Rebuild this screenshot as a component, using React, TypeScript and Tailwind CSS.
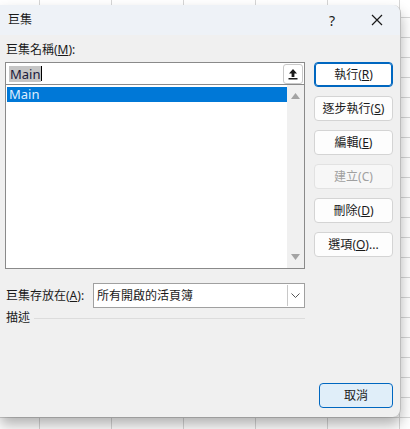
import React from "react";

const font = { fontFamily: '"Noto Sans", "Noto Sans CJK TC", sans-serif' };

function Btn({ label, keyChar, suffix = "", primary, disabled }: { label: string; keyChar: string; suffix?: string; primary?: boolean; disabled?: boolean }) {
  return (
    <button
      className={
        "flex h-[25px] w-[79px] items-center justify-center rounded-[4px] border text-[12px] leading-none " +
        (primary
          ? "border-[#0067c0] bg-white text-[#1a1a1a] shadow-[inset_0_0_0_1px_#0067c0]"
          : disabled
          ? "border-[#e2e2e2] bg-[#f7f7f7] text-[#a0a0a0]"
          : "border-[#d4d4d4] bg-[#fdfdfd] text-[#1a1a1a]")
      }
    >
      {label}(<u className={disabled ? "no-underline" : ""}>{keyChar}</u>){suffix}
    </button>
  );
}

export default function App() {
  return (
    <div
      className="relative h-[429px] w-[410px] overflow-hidden bg-white bg-[linear-gradient(to_right,#d6d6d6_1px,transparent_1px),linear-gradient(to_bottom,#d6d6d6_1px,transparent_1px)] bg-size-[72px_20px] bg-position-[39px_17px]"
      style={font}
    >
      <div className="absolute left-0 top-[5px] flex h-[412px] w-[401px] flex-col overflow-hidden rounded-r-[8px] border-r border-[#bdbdbd] bg-[#f0f0f0] shadow-[0_8px_14px_rgba(0,0,0,0.3)]">
        {/* title bar */}
        <div className="flex h-[30px] items-center bg-[#eef2f7] pl-[8px] text-[12px] text-[#1a1a1a]">
          <span className="flex-1">巨集</span>
          <span className="w-[14px] text-center text-[14px]">?</span>
          <span className="ml-[31px] mr-[16px] flex w-[14px] items-center justify-center">
            <svg width="12" height="12" viewBox="0 0 12 12">
              <path d="M1 1L11 11M11 1L1 11" stroke="#1a1a1a" strokeWidth="1.2" />
            </svg>
          </span>
        </div>

        {/* body */}
        <div className="flex flex-1 flex-col px-[5px] pt-[7px] text-[12px] text-[#1a1a1a]">
          <div className="pl-[1px] leading-[16px]">
            巨集名稱(<u>M</u>):
          </div>

          <div className="mt-[4px] flex">
            {/* left column */}
            <div className="flex w-[300px] flex-col">
              <div className="flex h-[23px] items-center border border-[#8a8a8a] bg-white pl-[3px] pr-[1px]">
                <span className="bg-[#c6c6c6] px-[1px] text-[13px] leading-[16px] text-[#1a1a3a]">Main</span>
                <span className="h-[15px] w-px bg-black" />
                <span className="flex-1" />
                <span className="flex h-[20px] w-[20px] items-center justify-center rounded-[3px] border border-[#c8c8c8] bg-white">
                  <svg width="10" height="12" viewBox="0 0 10 12">
                    <path d="M5 1L1 5.5H3.6V9H6.4V5.5H9Z" fill="#1a1a1a" />
                    <rect x="0.5" y="10" width="9" height="1.5" fill="#1a1a1a" />
                  </svg>
                </span>
              </div>
              <div className="flex h-[184px] border border-t-0 border-[#8a8a8a] bg-white">
                <div className="flex-1 pl-px pt-[2px]">
                  <div className="flex h-[15px] items-center bg-[#0078d7] pl-[2px] text-[13px] text-[#dfeeff]">Main</div>
                </div>
                <div className="flex w-[17px] flex-col items-center justify-between bg-[#f0f0f0] py-[8px]">
                  <svg width="9" height="6" viewBox="0 0 9 6">
                    <path d="M4.5 0L9 6H0Z" fill="#a3a3a3" />
                  </svg>
                  <svg width="9" height="6" viewBox="0 0 9 6">
                    <path d="M0 0H9L4.5 6Z" fill="#a3a3a3" />
                  </svg>
                </div>
              </div>

              <div className="mt-[14px] flex items-center">
                <span className="w-[88px] pl-[1px]">
                  巨集存放在(<u>A</u>):
                </span>
                <div className="flex h-[25px] flex-1 items-center border border-[#a0a0a0] bg-white pl-[3px]">
                  <span className="flex-1">所有開啟的活頁簿</span>
                  <span className="mr-px flex h-[21px] w-[16px] items-center justify-center border-l border-[#c8c8c8]">
                    <svg width="9" height="5" viewBox="0 0 9 5">
                      <path d="M0.5 0.5L4.5 4.5L8.5 0.5" fill="none" stroke="#555" strokeWidth="1" />
                    </svg>
                  </span>
                </div>
              </div>

              <div className="mt-[2px] flex items-center">
                <span className="pl-[1px] leading-[16px]">描述</span>
                <span className="ml-[4px] h-px flex-1 bg-[#dcdcdc]" />
              </div>
            </div>

            {/* right column */}
            <div className="ml-[9px] flex flex-col gap-[9px]">
              <Btn label="執行" keyChar="R" primary />
              <Btn label="逐步執行" keyChar="S" />
              <Btn label="編輯" keyChar="E" />
              <Btn label="建立" keyChar="C" disabled />
              <Btn label="刪除" keyChar="D" />
              <Btn label="選項" keyChar="O" suffix="..." />
            </div>
          </div>

          <div className="mb-[9px] mt-auto flex justify-end pr-[2px]">
            <button className="flex h-[25px] w-[74px] items-center justify-center rounded-[4px] border border-[#0067c0] bg-[#e0eef9] text-[12px] text-[#1a1a1a]">
              取消
            </button>
          </div>
        </div>
      </div>
    </div>
  );
}
